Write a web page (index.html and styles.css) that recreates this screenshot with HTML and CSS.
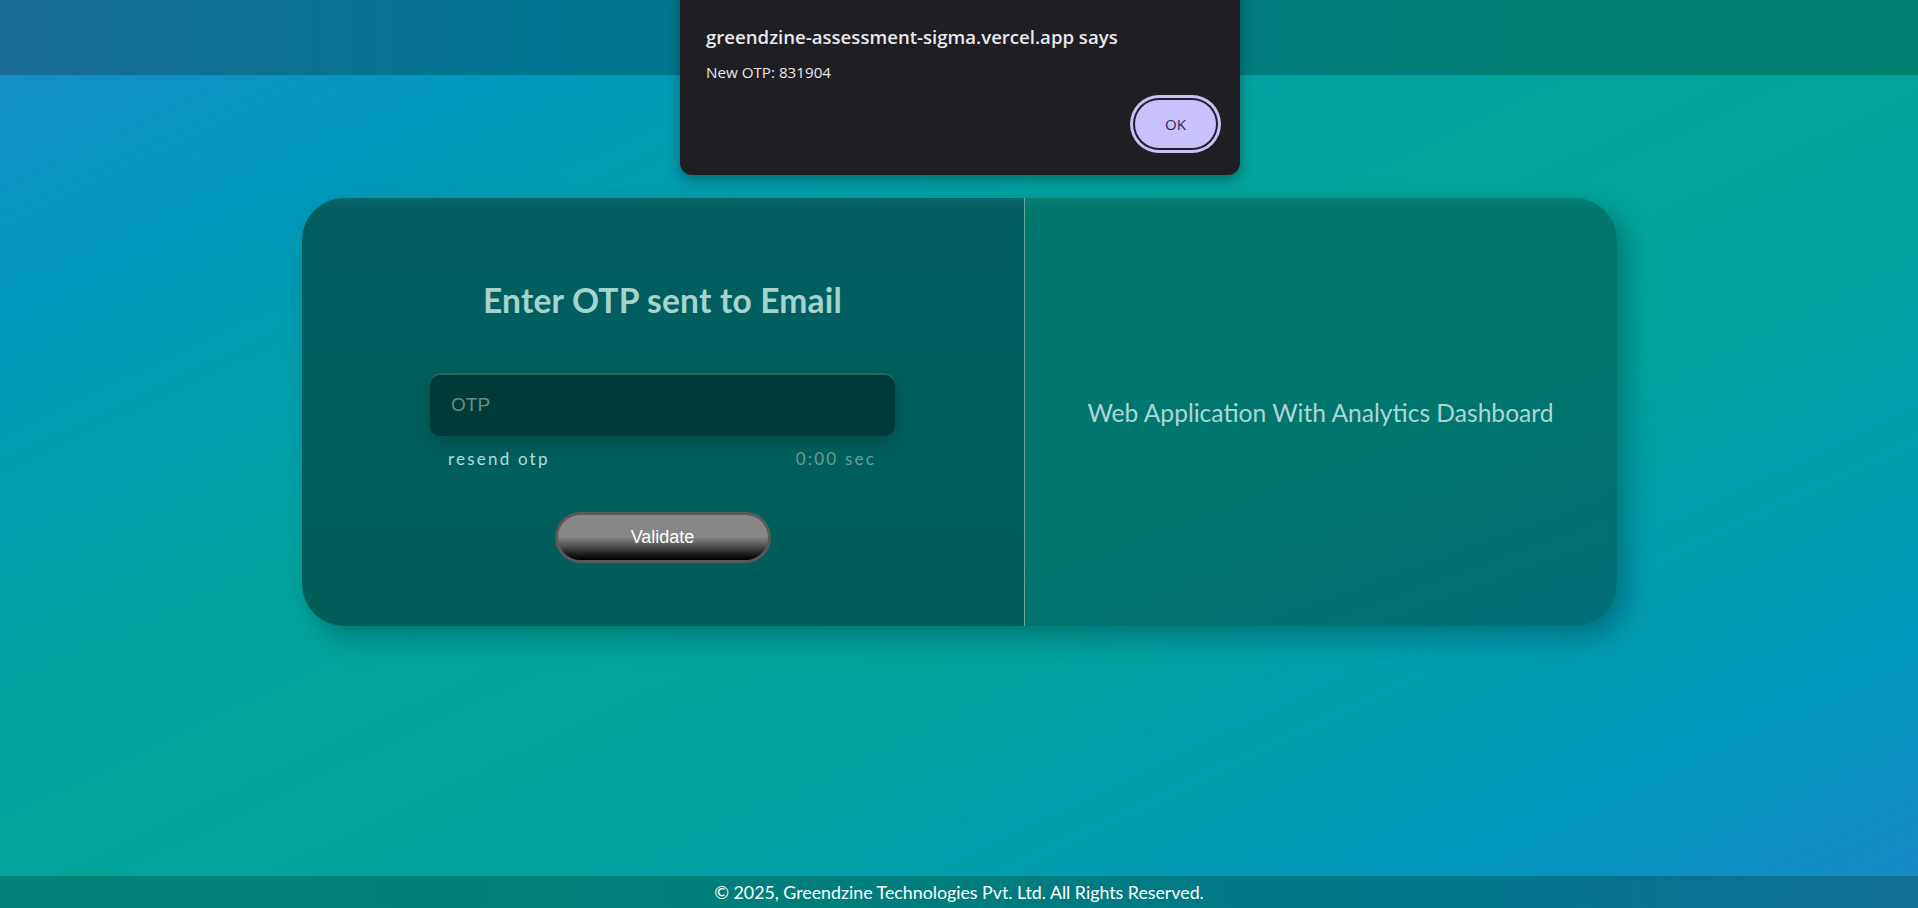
FILE: index.html
```html
<!DOCTYPE html>
<html lang="en">
<head>
<meta charset="utf-8">
<title>Greendzine - OTP</title>
<link rel="stylesheet" href="styles.css">
</head>
<body>
<div class="page">
  <header class="topbar"></header>
  <main class="main">
    <section class="card">
      <div class="panel-left">
        <h1 class="title">Enter OTP sent to Email</h1>
        <div class="field">
          <input class="otp-input" type="text" placeholder="OTP">
          <div class="field-meta">
            <span class="resend">resend otp</span>
            <span class="timer">0:00 sec</span>
          </div>
        </div>
        <button class="validate" type="button">Validate</button>
      </div>
      <div class="panel-right">
        <p class="tagline">Web Application With Analytics Dashboard</p>
      </div>
    </section>
  </main>
  <footer class="footer">© 2025, Greendzine Technologies Pvt. Ltd. All Rights Reserved.</footer>
</div>

<div class="alert" role="alertdialog">
  <div class="alert-title">greendzine-assessment-sigma.vercel.app says</div>
  <div class="alert-msg">New OTP: 831904</div>
  <div class="alert-actions">
    <button class="alert-ok" type="button">OK</button>
  </div>
</div>
</body>
</html>
```

FILE: styles.css
```css
* { box-sizing: border-box; }

html, body {
  margin: 0;
  padding: 0;
  height: 100%;
}

body {
  font-family: "Lato", "Noto Sans", sans-serif;
  background: linear-gradient(to bottom right, #1a8dca 0%, #0099bd 18%, #00a39f 38%, #00a59a 50%, #00a39c 62%, #0098bd 85%, #1a87c6 100%);
  overflow: hidden;
}

.page {
  height: 908px;
  display: flex;
  flex-direction: column;
}

.topbar {
  height: 75px;
  flex: 0 0 75px;
  background: linear-gradient(90deg, #196c97 0%, #00768f 30%, #007b85 55%, #007f75 80%, #00806e 100%);
}

.main {
  flex: 1;
  padding-top: 123px;
}

.card {
  width: 1315px;
  height: 428px;
  margin: 0 auto;
  border-radius: 42px;
  overflow: hidden;
  display: grid;
  grid-template-columns: 722px 1px 1fr;
  box-shadow: 10px 12px 26px rgba(0, 40, 50, 0.35);
  position: relative;
}

.card::before {
  content: "";
  grid-column: 2;
  grid-row: 1;
  background: #6aa7a0;
}

.panel-left {
  grid-column: 1;
  grid-row: 1;
  background: linear-gradient(180deg, #025c60 0%, #006060 40%, #005d57 100%);
  box-shadow: inset 0 10px 14px -8px rgba(30, 140, 140, 0.45);
  display: flex;
  flex-direction: column;
  align-items: center;
  padding-top: 82px;
}

.panel-right {
  grid-column: 3;
  grid-row: 1;
  background: linear-gradient(160deg, #00776e 0%, #00766e 55%, #016f78 100%);
  box-shadow: inset 0 10px 14px -8px rgba(30, 150, 140, 0.45);
  display: flex;
  align-items: center;
  justify-content: center;
}

.title {
  margin: 0;
  font-family: "Lato", sans-serif;
  font-weight: 700;
  font-size: 33.5px;
  line-height: 40px;
  color: #a6d3cc;
  letter-spacing: 0.2px;
}

.field {
  margin-top: 53px;
  width: 465px;
}

.otp-input {
  display: block;
  width: 465px;
  height: 63px;
  border: none;
  outline: none;
  border-radius: 10px;
  background: #003b37;
  box-shadow: inset 0 2px 0 rgba(120, 180, 170, 0.35), 0 6px 16px rgba(0, 30, 30, 0.3);
  padding: 0 21px;
  font-family: "Liberation Sans", Arial, sans-serif;
  font-size: 19px;
  color: #cfe3df;
}

.otp-input::placeholder {
  color: #6d8a85;
}

.field-meta {
  margin-top: 13px;
  padding: 0 19px 0 18px;
  display: flex;
  justify-content: space-between;
  align-items: center;
  line-height: 20px;
  font-family: "Lato", sans-serif;
  font-size: 17px;
  letter-spacing: 2.2px;
}

.resend {
  color: #b2ddd6;
}

.timer {
  color: #6e9a94;
}

.validate {
  margin-top: 43px;
  width: 216px;
  height: 51px;
  border: 3px solid #5a5a5a;
  border-radius: 26px;
  background: linear-gradient(180deg, #888888 0%, #868686 48%, #5a5a5a 66%, #222 85%, #000 100%);
  color: #ffffff;
  font-family: "Liberation Sans", Arial, sans-serif;
  font-size: 18px;
  padding: 0;
  cursor: pointer;
}

.tagline {
  margin: 0;
  font-family: "Lato", sans-serif;
  font-size: 24.6px;
  color: #acd7d0;
}

.footer {
  height: 32px;
  flex: 0 0 32px;
  background: linear-gradient(90deg, #008179 0%, #007e7c 45%, #00778a 75%, #136f97 100%);
  color: #ffffff;
  font-family: "Lato", sans-serif;
  font-size: 17.8px;
  display: flex;
  align-items: center;
  justify-content: center;
}

/* Browser alert overlay */
.alert {
  position: absolute;
  top: -12px;
  left: 680px;
  width: 560px;
  height: 187px;
  background: #1f1e23;
  border-radius: 12px;
  box-shadow: 0 4px 14px rgba(0, 0, 0, 0.35);
  padding: 36px 24px 0 26px;
  font-family: "Open Sans", "Noto Sans", sans-serif;
  color: #e9e8ee;
  display: flex;
  flex-direction: column;
}

.alert-title {
  font-size: 18.6px;
  font-weight: 600;
  line-height: 26px;
}

.alert-msg {
  margin-top: 12px;
  font-size: 15.2px;
  line-height: 20px;
}

.alert-actions {
  margin-top: 18px;
  display: flex;
  justify-content: flex-end;
}

.alert-ok {
  width: 81px;
  height: 48px;
  border: none;
  border-radius: 24px;
  background: #c9c1fa;
  color: #2c2960;
  font-family: "Open Sans", sans-serif;
  font-size: 15px;
  font-weight: 500;
  box-shadow: 0 0 0 2px #1f1e23, 0 0 0 5px #c9c1fa;
  padding: 0;
}
```
